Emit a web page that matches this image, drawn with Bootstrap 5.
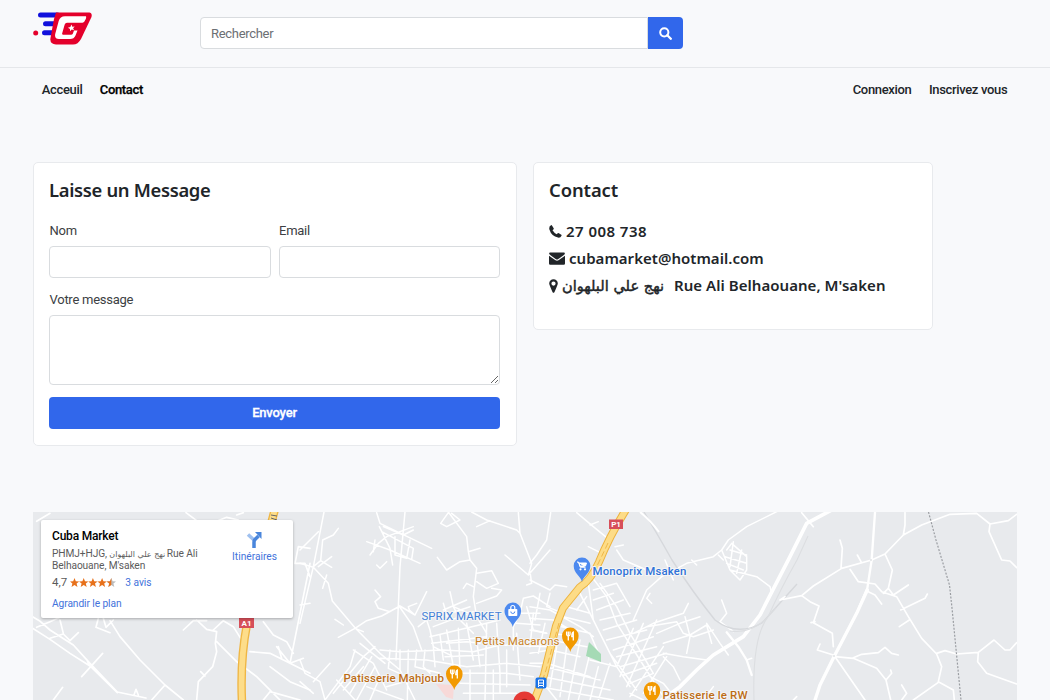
<!DOCTYPE html>
<html lang="fr">
<head>
<meta charset="utf-8">
<meta name="viewport" content="width=device-width, initial-scale=1">
<title>Cuba Market - Contact</title>
<link href="https://cdn.jsdelivr.net/npm/bootstrap@5.3.0/dist/css/bootstrap.min.css" rel="stylesheet">
<style>
  body { font-family: Roboto, "DejaVu Sans", sans-serif; font-size: 13px; background: #f8f9fb; color: #212529; overflow: hidden; }
  .topbar { height: 68px; border-bottom: 1px solid #e5e7ea; padding-left: 33px; }
  .brand-logo { width: 60px; height: 36px; margin: 11px 107px 0 0; }
  .search-box { width: 483px; height: 32px; margin-top: 17px; }
  .search-box .form-control, .msg-form .form-control { font-size: 13px; border-color: #d9dcdf; border-radius: 4px; height: 32px; padding: 5px 10px; }
  .search-box .form-control { border-radius: 4px 0 0 4px; letter-spacing: -.3px; }
  .search-box .form-control::placeholder { color: #6c6f73; }
  .btn-cuba { background: #3167eb; color: #fff; border: 0; border-radius: 4px; }
  .search-box .btn-cuba { width: 35px; flex: none; }
  .mainnav { height: 43px; padding: 0 34px 0 33px; font-weight: 500; }
  .mainnav .nav-link { color: #212529; padding: 0 8.7px; font-size: 13px; letter-spacing: -.33px; }
  .mainnav .nav-link.active { color: #000; -webkit-text-stroke: .25px; }
  .panels { padding: 51px 0 0 33px; gap: 16px; }
  .panel { border: 1px solid #e8eaed; border-radius: 5px; padding: 15px 16px 15px 15px; background: #fff; }
  .panel-form { width: 484px; height: 284px; }
  .panel-info { width: 400px; height: 168px; }
  .panel h2 { font: 600 18.4px/24px "Noto Sans", sans-serif; margin: 0 0 17px; }
  .panel-form h2 { letter-spacing: -.32px; }
  .panel-info h2 { letter-spacing: -.1px; }
  .msg-form label { line-height: 20px; height: 27px; color: #3c4043; display: block; padding-top: 2px; letter-spacing: -.26px; padding-left: .5px; }
  .msg-form .lower-field { margin-top: 10px; }
  .msg-form textarea.form-control { height: 70px; }
  .msg-form .btn-cuba { height: 32px; font-size: 13px; font-weight: 500; padding: 0; margin-top: 12px; -webkit-text-stroke: .3px; letter-spacing: -.2px; }
  .info-lines { margin-top: -1px; }
  .info-line { font: 600 15px/27px "Noto Sans", "DejaVu Sans", sans-serif; height: 27px; white-space: nowrap; }
  .info-line svg { flex: none; }
  .t-phone { letter-spacing: .45px; }
  .t-mail { letter-spacing: .03px; }
  .t-addr { letter-spacing: .05px; }
  .arabic { display: inline-block; width: 108px; font: 400 14.6px/20px "DejaVu Sans", sans-serif; letter-spacing: 0; -webkit-text-stroke: .45px; }
  .map-wrap { position: relative; width: 984px; height: 188px; margin: 66px 0 0 33px; overflow: hidden; background: #e8eaed; }
  .map-wrap > svg { display: block; }
  .place-card { position: absolute; left: 8px; top: 8px; width: 252px; height: 98px; padding: 9px 16px 0 11px; background: #fff; border-radius: 2px; box-shadow: 0 1px 3px rgba(0,0,0,.28); color: #5b5b5b; }
  .place-name { font-size: 12px; font-weight: 500; line-height: 15px; color: #000; letter-spacing: -.2px; }
  .place-addr { font-size: 10.2px; line-height: 12px; margin-top: 4px; white-space: nowrap; letter-spacing: -.1px; }
  .arabic-sm { display: inline-block; width: 55px; font: 8px/10px "DejaVu Sans", sans-serif; letter-spacing: 0; }
  .rating-row { height: 16px; margin-top: 3px; font-size: 11.500px; }
  .place-card .bluelink { color: #4272db; font-size: 10.2px; text-decoration: none; }
</style>
</head>
<body>
<header class="topbar d-flex align-items-start">
  <svg class="brand-logo" viewBox="33 11 60 36" aria-label="Cuba Market">
    <g fill="#1010dc"><rect x="38" y="12.500" width="22" height="5" rx="2.500"/><rect x="43" y="21.300" width="16" height="5" rx="2.500"/><rect x="42" y="30.300" width="14" height="5" rx="2.500"/></g>
    <circle cx="35.700" cy="33" r="2.500" fill="#e4002b"/>
    <path d="M56 12.500H89.500Q92.500 13 91.500 17L81 39Q78 44.500 73 44.500H56Q49.500 44 50.500 38L54 19Z" fill="#e4002b"/>
    <path d="M86 16.300H65Q60 16.300 58.700 21L55.200 34Q54.300 39 59 39H70Q74 39 75.500 35.500L77.500 30.500H74L72.800 33.800Q72.400 34.800 71 34.800H63.200Q61.800 34.700 62.200 33.200L64.700 24.500Q65.300 22.700 67 22.700H82.500Q84.500 22.300 85.800 19Q86.500 16.800 86 16.300Z" fill="#fff"/>
    <path d="m71.500 24.500.8 2.200 2.400-.3-1.600 1.800 1 2.100-2.400-.7-1.700 1.700v-2.400l-2.100-1.200 2.400-.6z" fill="#fff"/>
  </svg>
  <form class="search-box d-flex">
    <input class="form-control" type="text" placeholder="Rechercher">
    <button class="btn btn-cuba rounded-start-0 p-0 d-flex align-items-center justify-content-center" type="button" aria-label="Rechercher">
      <svg width="13" height="13" viewBox="0 0 13 13" fill="none" stroke="#fff"><circle cx="5.300" cy="5.300" r="4.100" stroke-width="2"/><path d="m8.300 8.300 3.500 3.500" stroke-width="2.300" stroke-linecap="round"/></svg>
    </button>
  </form>
</header>
<nav class="mainnav d-flex justify-content-between align-items-center">
  <div class="nav"><a class="nav-link" href="#">Acceuil</a><a class="nav-link active" href="#">Contact</a></div>
  <div class="nav"><a class="nav-link" href="#">Connexion</a><a class="nav-link" href="#">Inscrivez vous</a></div>
</nav>
<main>
  <div class="panels d-flex align-items-start">
    <section class="panel panel-form">
      <h2>Laisse un Message</h2>
      <form class="msg-form">
        <div class="row gx-2">
          <div class="col-6"><label for="nom">Nom</label><input id="nom" class="form-control" type="text"></div>
          <div class="col-6"><label for="mail">Email</label><input id="mail" class="form-control" type="text"></div>
        </div>
        <div class="lower-field"><label for="msg">Votre message</label><textarea id="msg" class="form-control d-block"></textarea></div>
        <button class="btn btn-cuba w-100 d-block" type="button">Envoyer</button>
      </form>
    </section>
    <section class="panel panel-info">
      <h2>Contact</h2>
      <div class="info-lines">
      <div class="info-line d-flex align-items-center"><svg width="13" height="13" viewBox="0 0 13 13" fill="#212529"><path d="M2.800.3 4.700 3.300Q5 4 4.300 4.500L3.500 5.200Q5.300 8 7.700 9.300L8.700 8.300Q9.200 7.900 9.900 8.200L12.300 9.700Q12.800 10.100 12.500 10.800Q11.500 13 9 12.600Q2.500 11.300.4 4.500Q-.3 1.200 2.100.2Q2.500 0 2.800.3Z"/></svg><span class="t-phone ms-1">27 008 738</span></div>
      <div class="info-line d-flex align-items-center"><svg width="16" height="13" viewBox="0 0 16 13" fill="#212529"><path d="M1 .5H15Q16 .6 15.800 2Q15.300 3 9 7.200Q8 7.800 7 7.200Q.8 3 .2 2Q0 .6 1 .5Z"/><path d="M0 3.700 6.500 8.300Q8 9.200 9.500 8.300L16 3.700V11.500Q16 12.700 14.800 12.700H1.200Q0 12.700 0 11.500Z"/></svg><span class="t-mail ms-1">cubamarket@hotmail.com</span></div>
      <div class="info-line d-flex align-items-center"><svg width="9" height="14" viewBox="0 0 9 14" fill="#212529"><path fill-rule="evenodd" d="M4.500.2A4.300 4.300 0 0 1 8.800 4.600Q8.800 6 5.400 13.200Q4.500 14.300 3.600 13.200Q.2 6 .2 4.600A4.300 4.300 0 0 1 4.500.2ZM4.500 2.500A2.100 2.100 0 1 0 4.500 6.700 2.100 2.100 0 0 0 4.500 2.500Z"/></svg><span class="t-addr ms-1"><span class="arabic">نهج علي البلهوان</span> Rue Ali Belhaouane, M'saken</span></div>
      </div>
    </section>
  </div>
  <section class="map-wrap">
    <svg width="984" height="188" viewBox="33 512 984 188" font-family="Roboto, sans-serif">
      <!-- soft area -->
      <path d="M436 684 454 685 453 699 446 697Z" fill="#f7d9d8"/>
      <!-- western roads -->
      <g transform="translate(30 500) scale(.33333)" fill="none" stroke="#fff" stroke-width="5" stroke-linejoin="round" stroke-linecap="round">
        <path d="M0 346 28 362 60 390 130 435 180 490 262 576 348 594M0 380 60 418 120 460 180 498 262 578M20 382 60 365 90 352M60 415 100 402 120 422 145 398M100 400 90 360M155 530 218 460M178 496 170 478M180 498 220 533M70 600 98 562M205 355 198 382 240 398M220 355 228 382 250 360M240 362 270 410 330 480 405 555 460 600M405 555 365 600M312 585 318 568 325 585M270 66 275 75M460 390 490 362 530 362M500 360 530 388 560 395 556 430 560 455 548 500 505 545 500 600M512 515 525 528M550 390 580 362 610 380 632 415M560 425 620 485 680 530 750 600M660 455 720 460 780 490 840 520M700 365 730 405 770 425 790 460M740 440 780 490 820 290 840 190M745 440 755 475M780 490 820 475M720 500 780 545 840 570M700 600 720 575 810 600M795 190 805 140 840 145M795 190 825 190 840 230M560 64 590 52 625 60M620 45 640 38M468 38 500 62M20 64 60 40"/>
      </g>
      <!-- center-west roads -->
      <g transform="translate(300 500) scale(.33333)" fill="none" stroke="#fff" stroke-width="4.500" stroke-linejoin="round" stroke-linecap="round">
        <path d="M72 36 40 200 0 370M0 150 55 95M0 190 40 202 85 250 97 303 165 383 240 460 300 510 345 600M40 200 62 182 95 202M62 182 68 120 100 105 115 85M68 265 80 225M0 315 30 310M55 200 95 170M315 36 300 200 288 480M230 38 240 70 395 145M238 80 270 145 278 195M200 125 270 150 360 190M210 165 235 130 260 110 340 80M245 95 340 145 335 178M250 80 310 105 340 90M285 110 285 165 320 175 330 120M225 120 220 155M230 195 240 205 260 185M225 270 242 290 225 305 235 325 270 335M115 412 165 385 200 362 245 348 300 318 345 345M165 385 190 395M105 358 130 375M345 345 380 275M295 315 340 380 365 450M345 345 328 330 325 320 350 310M355 380 380 360 390 390M445 36 500 110 505 155 540 145M445 38 422 70 440 80 480 60 455 40M505 155 510 180 480 185 440 210 412 172M510 180 530 205 520 290 530 350M530 220 575 212 595 250 560 265 530 245M575 265 605 270 590 288 530 310M490 265 500 250 520 260M515 36 560 60 650 90 660 100 695 190M655 38 660 100M530 80 570 62M615 165 685 225 750 150M695 190 685 225M690 215 695 250 680 255M670 295 700 288 750 320M670 295 660 340 640 380 640 450M450 275 460 320 480 360 520 400M430 330 500 300M420 350 510 320M400 380 520 335M390 410 600 360M395 430 560 410M390 390 400 440 460 470M430 310 445 360M460 320 530 350 560 400M240 450 300 455 430 450 520 455 600 435 750 440M240 475 380 480 500 500 620 490 720 500M270 450 265 505 320 530M300 450 300 510M325 450 322 600M350 450 345 500 420 520M375 450 370 500 390 520M400 440 405 500M420 405 430 480M440 390 460 500M475 385 480 510M500 370 520 480M530 420 540 500M560 370 555 600M590 370 600 520M620 450 620 560M650 400 660 540M680 320 700 390 740 400M660 340 720 340M650 370 720 375M0 480 15 520 60 545 75 600M75 600 150 500 165 450M100 580 190 470 225 440M110 540 165 600M160 450 220 490 260 570M180 430 255 490M190 500 130 570M215 470 150 580M225 500 170 600M240 530 210 600M0 545 40 580M40 545 90 490M260 560 330 540M200 560 310 600M480 520 620 520 700 530M480 550 690 555M490 580 650 580M510 510 510 600M580 510 580 600M600 520 600 580M440 430 500 425 540 430M435 470 550 465"/>
      </g>
      <!-- center-east roads -->
      <g transform="translate(530 500) scale(.33333)" fill="none" stroke="#fff" stroke-width="4.500" stroke-linejoin="round" stroke-linecap="round">
        <path d="M62 38 50 120 20 165 0 190M140 38 190 80 245 125M180 75 205 65M175 140 205 155M255 140 280 135M260 150 280 180 350 210 400 220M0 240 60 270 75 255 110 260M60 280 50 320 100 340M0 320 60 330 150 380 190 410M0 355 70 360 140 400M175 250 190 360 240 460 320 570M185 230 230 290 260 370 330 480 400 590M210 250 260 320 300 400 370 520M150 280 210 400 260 500M110 320 180 340M100 350 180 370M120 310 150 260M140 330 170 290M95 380 180 400 210 470M190 270 260 250 300 320M190 300 250 280M200 330 280 300M210 360 300 340M220 390 320 360M230 420 350 390M250 450 370 410M260 470 380 440M270 500 410 460M280 525 380 490M300 550 370 520M310 385 260 500M340 370 270 530M380 360 290 560M400 440 300 590M410 470 340 580M310 360 350 270 395 230 470 190 550 170 575 150 595 120 650 80 750 30M575 150 600 210 630 240 650 210 650 170 605 130 590 150M585 170 650 190M590 190 640 210M600 150 650 165M610 125 600 200M635 150 620 220M600 210 680 230 720 260 725 280M485 180 500 195M565 165 580 180M575 300 590 340 570 365 610 395M360 280 350 295 365 310M405 180 430 240M310 400 370 370 460 340 475 310M350 380 440 365 460 400 490 410 550 390M380 400 450 370 510 350M400 430 480 405 530 375 545 430M400 460 460 470 530 480 590 440M465 350 480 410 470 460M530 370 570 430 595 465M650 480 665 475M400 470 430 500 450 540M0 460 60 450 150 470M0 490 50 490 180 530M45 500 210 540M40 530 240 570M30 560 250 600M60 420 170 440M70 400 130 410M45 370 25 460M80 440 60 560M110 440 90 590M150 420 115 600M180 460 145 600M205 500 180 600M240 490 205 600M180 480 260 500 300 560M40 550 80 600M360 530 400 550 440 600M300 580 340 600M520 600 550 560M0 390 50 400M0 420 40 430M10 340 0 440M30 280 15 360"/>
        <path d="M590 397 625 440 650 480 665 525" stroke-width="7"/>
        <path d="M395 600 450 560 500 510 550 465 640 410 690 345 780 170 830 70 905 30" stroke-width="11"/>
      </g>
      <!-- railways -->
      <g fill="none" stroke="#d6d8dc" stroke-width="1.100">
        <path d="M644 512Q655 530 672 560Q694 594 715 620Q737 637 762 623L797 584" stroke-width="1.400"/>
        <path d="M808 536 797 560Q780 590 768 617Q752 637 754 700M730 631Q750 634 766 619L776 608" stroke="#dcdee1"/>
        <path d="M640 512Q650 520 659 532" stroke="#fff" stroke-width="2"/>
      </g>
      <!-- eastern roads -->
      <g transform="translate(780 500) scale(.33333)" fill="none" stroke="#fff" stroke-width="5" stroke-linejoin="round" stroke-linecap="round">
        <path d="M0 300 65 287 100 258 185 205 275 180 315 162 370 105 425 75 510 43 590 40 630 72 685 62 710 43M65 38 100 80M180 120 187 145 183 205M232 165 243 185M375 38 375 75 370 105M315 162 337 210 325 265 340 285 385 255M210 208 235 245 285 252 305 275 350 290 385 350 425 415 470 462 485 500 475 545 520 570 523 600M310 280 325 265M362 330 435 295 442 282M358 380 388 360M265 275 285 285 305 312M65 287 90 305 117 318 100 368 157 400 160 440M93 368 105 365M160 465 112 450 120 432M165 470 220 475 290 505 318 540 332 600M220 473 245 463 295 458 315 442 335 460 355 465M318 540 335 520 332 510M165 470 255 600M475 547 400 600M365 555 380 580 365 600M470 460 495 452 530 462 595 457 642 420 675 450 690 450 710 428M595 457 593 485 620 520 710 552M630 72 627 95 665 180 690 183 710 203M0 300 15 290M40 600 50 590"/>
        <path d="M285 38 275 180 262 265 230 340 162 470 120 555 105 600" stroke-width="7"/>
        <path d="M262 270 230 340 162 470 120 555 105 600" stroke-width="10"/>
      </g>
      <path d="M928.500 512 936 540 949.500 585 952 608 961 700" fill="none" stroke="#9a9da2" stroke-width="1.200" stroke-dasharray="2 1.500"/>
      <circle cx="834" cy="656" r="1" fill="#e1e3e6"/><circle cx="871" cy="560" r="1" fill="#e1e3e6"/>
      <!-- park -->
      <path d="M589 642 601 654 601 662 586 656Z" fill="#a5dab5"/>
      <!-- highways -->
      <g fill="none" stroke-linejoin="round">
        <path d="M247 624Q240 660 242 702M275 509 271 524" stroke="#efb644" stroke-width="8.500"/>
        <path d="M247 624Q240 660 242 702M275 509 271 524" stroke="#fddd8a" stroke-width="5.800"/>
        <path d="M627 508Q610 535 599 562Q591 580 580 587L563 608 556 626 544 675 533 704" stroke="#edb33d" stroke-width="8"/>
        <path d="M627 508Q610 535 599 562Q591 580 580 587L563 608 556 626 544 675 533 704" stroke="#fddc87" stroke-width="6"/>
        <path d="M608 543Q601 558 595 570M559 623 546 670 540 688" stroke="#efb84a" stroke-width="1" stroke-dasharray="6 3"/>
      </g>
      <path d="m271 515 6 1m-6 2 6 2" stroke="#666" stroke-width="1"/>
      <g font-size="8" font-weight="700" fill="#fff" text-anchor="middle">
        <rect x="239" y="618" width="15" height="10" fill="#d74f59"/><text x="246.500" y="626">A1</text>
        <rect x="609" y="519.500" width="14" height="9.500" fill="#d74f59"/><text x="616" y="527.200">P1</text>
      </g>
      <!-- pins -->
      <defs>
        <path id="pin" d="M0 24C-1.200 18-8.300 15.500-8.300 7.800A8.300 8.300 0 0 1 8.300 7.800C8.300 15.500 1.200 18 0 24Z"/>
        <g id="fork"><path d="M-3.700 3.500V6.500Q-3.500 8-2 8V12.500M-2 3.500V8M-.3 3.500V6.500Q-.5 8-2 8M3 12.500V4Q1.500 4.500 1.500 8.500H3" fill="none" stroke="#fff" stroke-width="1.300"/></g>
      </defs>
      <g transform="translate(582 558)"><use href="#pin" fill="#4c89ef"/><path d="M-5 4H-3.500L-1.800 9.200H3.500M-3 5H4.500L3.500 8H-2Z" fill="#fff" stroke="#fff"/><circle cx="-1.500" cy="11.300" r="1.100" fill="#fff"/><circle cx="3" cy="11.300" r="1.100" fill="#fff"/></g>
      <g transform="translate(512.800 603)"><use href="#pin" fill="#4c89ef"/><rect x="-4.500" y="6" width="9" height="7" rx=".8" fill="#fff"/><path d="M-2 6V4.500A2 2 0 0 1 2 4.500V6" fill="none" stroke="#fff" stroke-width="1.200"/><path d="M-2 8.500A2 2 0 0 0 2 8.500" fill="none" stroke="#4c89ef"/></g>
      <g transform="translate(570.300 628)"><use href="#pin" fill="#f29900"/><use href="#fork"/></g>
      <g transform="translate(454.300 666)"><use href="#pin" fill="#f29900"/><use href="#fork"/></g>
      <g transform="translate(652 682.500)"><use href="#pin" fill="#f29900"/><use href="#fork"/></g>
      <circle cx="524.500" cy="703" r="11.500" fill="#e53935"/><circle cx="524.500" cy="702.500" r="3.800" fill="#a5201c"/>
      <rect x="535.500" y="677.500" width="11" height="11" rx="2" fill="#1a73e8"/><path d="M538.500 680H543.500V685.500H538.500ZM538.500 683H543.500" fill="none" stroke="#fff" stroke-width="1"/><path d="M538.500 687v-1M543.500 687v-1" stroke="#fff"/>
      <!-- place labels -->
      <g font-size="11.500" font-weight="500" stroke="#f4f5f6" stroke-width="2.200" paint-order="stroke" stroke-linejoin="round">
        <text x="592.500" y="575" textLength="94" fill="#2f72d8">Monoprix Msaken</text>
        <text x="421.500" y="619.800" textLength="80" fill="#4380d6" font-weight="400">SPRIX MARKET</text>
        <text x="475" y="645" textLength="84.500" fill="#c98124" font-weight="400">Petits Macarons</text>
        <text x="343.500" y="682.300" textLength="100.500" fill="#bd6d16">Patisserie Mahjoub</text>
        <text x="662.500" y="699" textLength="85" fill="#bd6d16">Patisserie le RW</text>
      </g>
    </svg>
    <div class="place-card d-flex justify-content-between">
      <div>
        <div class="place-name">Cuba Market</div>
        <div class="place-addr">PHMJ+HJG, <span class="arabic-sm">نهج علي البلهوان</span> Rue Ali<br>Belhaouane, M'saken</div>
        <div class="rating-row d-flex align-items-center">4,7
          <svg width="46" height="10" viewBox="0 0 46 10" style="margin-left:3px"><defs><path id="st" d="m4.500 0 1.300 3.200 3.400.2-2.600 2.200.9 3.300-3-1.800-3 1.800.9-3.300-2.600-2.200 3.400-.2z"/></defs><g fill="#e7711b"><use href="#st"/><use href="#st" x="9.200"/><use href="#st" x="18.400"/><use href="#st" x="27.600"/></g><use href="#st" x="36.800" fill="#bbb"/><path d="M41.300 0V7.100L38.300 8.900l.9-3.300-2.600-2.200 3.400-.2z" fill="#e7711b"/></svg>
          <a class="bluelink" href="#" style="margin-left:9px">3 avis</a></div>
        <a class="bluelink d-block" href="#" style="line-height:14px;margin-top:6px;letter-spacing:-.08px">Agrandir le plan</a>
      </div>
      <div class="text-center" style="padding-top:2px">
        <svg class="d-block mx-auto" width="17" height="18" viewBox="0 0 17 18"><path d="M2 3.500 8 9" stroke="#9fc0ef" stroke-width="3.500" fill="none"/><path d="M8 17V11Q8 9.500 9.200 8.300L12.500 5" fill="none" stroke="#4a86dc" stroke-width="3.500"/><path d="M9 1H15.500V8Z" fill="#4a86dc"/></svg>
        <a class="bluelink d-block" href="#" style="line-height:14px;margin-top:1px">Itinéraires</a>
      </div>
    </div>
  </section>
</main>
<script src="https://cdn.jsdelivr.net/npm/bootstrap@5.3.0/dist/js/bootstrap.bundle.min.js"></script>
</body>
</html>
